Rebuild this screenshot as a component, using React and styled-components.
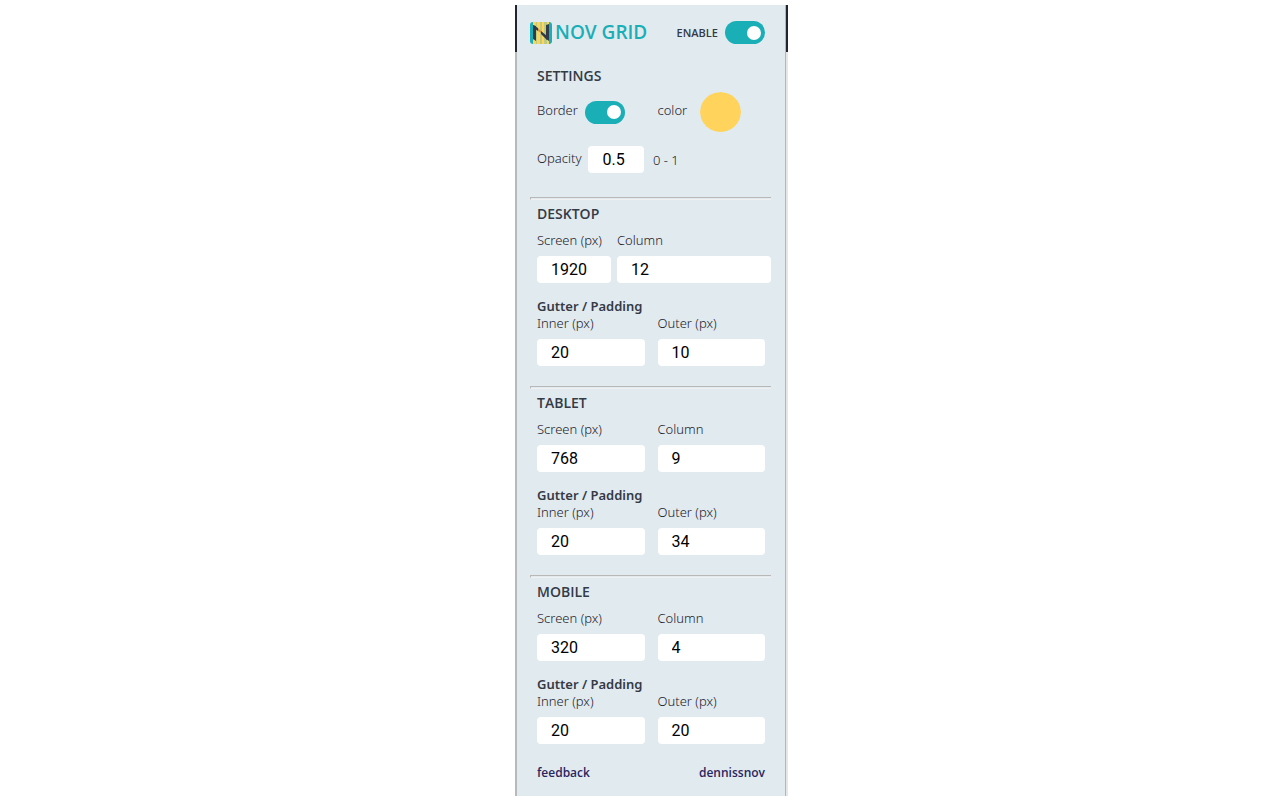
import React, { useState } from "react";
import styled, { createGlobalStyle } from "styled-components";

const screens = [
  { name: "Desktop", screen: "1920", column: "12", inner: "20", outer: "10", wide: true },
  { name: "Tablet", screen: "768", column: "9", inner: "20", outer: "34" },
  { name: "Mobile", screen: "320", column: "4", inner: "20", outer: "20" },
];

const Logo = () => (
  <svg width="22" height="22" viewBox="0 0 22 22" aria-hidden="true">
    <rect width="22" height="22" rx="3" fill="#1aaeb7" />
    <path d="M3 0h16v22H3z" fill="#ffd35c" />
    <path d="M6 0h1v22H6zM10 0h2v22h-2zM14 0h3v22h-3z" fill="#bccb7c" />
    <path d="M3 3l3 1v15l-3-2zM16 3l3-1v17l-3-2z" fill="#343a46" />
    <path d="M3 3l5 3v3L5 7zM11 9l6 5v4l-6-6z" fill="#343a46" />
    <path d="M8 6l3 3v2L8 9z" fill="#c9964c" />
  </svg>
);

const Switch = ({ id }) => {
  const [on, setOn] = useState(true);
  return (
    <SwitchInput
      id={id}
      type="checkbox"
      checked={on}
      onChange={(e) => setOn(e.target.checked)}
    />
  );
};

const Field = ({ id, label, value }) => (
  <div>
    <Label htmlFor={id}>{label}</Label>
    <TextInput id={id} type="text" defaultValue={value} />
  </div>
);

const ScreenSection = ({ name, screen, column, inner, outer, wide }) => {
  const id = name.toLowerCase();
  return (
    <Section>
      <Title>{name}</Title>
      <Fields $wide={wide}>
        <Field id={`${id}-screen`} label="Screen (px)" value={screen} />
        <Field id={`${id}-column`} label="Column" value={column} />
      </Fields>
      <SubTitle>Gutter / Padding</SubTitle>
      <Fields>
        <Field id={`${id}-inner`} label="Inner (px)" value={inner} />
        <Field id={`${id}-outer`} label="Outer (px)" value={outer} />
      </Fields>
    </Section>
  );
};

const App = () => {
  const [color, setColor] = useState("#ffd35c");
  return (
    <>
      <GlobalStyle />
      <Page>
        <Edge />
        <Panel>
          <Header>
            <Brand>
              <Logo />
              NOV GRID
            </Brand>
            <EnableLabel htmlFor="enable">ENABLE</EnableLabel>
            <Switch id="enable" />
          </Header>
          <Settings>
            <Title>Settings</Title>
            <Options>
              <Option>
                <Label htmlFor="border">Border</Label>
                <Switch id="border" />
              </Option>
              <Option $gap="13px">
                <Label htmlFor="color">color</Label>
                <ColorInput
                  id="color"
                  type="color"
                  value={color}
                  onChange={(e) => setColor(e.target.value)}
                />
              </Option>
            </Options>
            <Options $last>
              <Option>
                <Label htmlFor="opacity">Opacity</Label>
                <TextInput id="opacity" type="text" defaultValue="0.5" />
              </Option>
              <Hint>0 - 1</Hint>
            </Options>
          </Settings>
          {screens.map((item) => (
            <ScreenSection key={item.name} {...item} />
          ))}
          <Footer>
            <a href="#feedback">feedback</a>
            <a href="#dennissnov">dennissnov</a>
          </Footer>
        </Panel>
        <Edge $right />
      </Page>
    </>
  );
};

const GlobalStyle = createGlobalStyle`
  *,
  *::before {
    box-sizing: border-box;
  }
  body {
    margin: 0;
    background: #fff;
    color: #343a46;
    font-family: "Noto Sans", "Open Sans", sans-serif;
    font-size: 13px;
    line-height: 18px;
  }
`;

const Page = styled.main`
  display: flex;
  justify-content: center;
  padding: 5px 0 4px 23px;
`;

const Edge = styled.div`
  width: ${({ $right }) => ($right ? "3px" : "2px")};
  border-left: ${({ $right }) => ($right ? "1px solid #b4b6b8" : "0")};
  background: linear-gradient(
    #22252f 47px,
    ${({ $right }) => ($right ? "#e6e6e4" : "#b9b9bb")} 47px
  );
`;

const Panel = styled.div`
  flex: 0 1 268px;
  padding: 0 14px 0 13px;
  background: #e1eaef;
`;

const Header = styled.header`
  display: flex;
  align-items: center;
  padding: 16px 6px 0 0;
`;

const Brand = styled.h1`
  display: flex;
  align-items: center;
  gap: 3px;
  margin: 0 auto 0 0;
  color: #1aaeb7;
  font-family: "Open Sans", sans-serif;
  font-size: 19px;
  font-weight: 600;
  line-height: 23px;
  white-space: nowrap;
`;

const EnableLabel = styled.label`
  margin-right: 7px;
  font-family: "Open Sans", sans-serif;
  font-size: 11px;
  font-weight: 600;
`;

const SwitchInput = styled.input`
  appearance: none;
  display: flex;
  align-items: center;
  flex-shrink: 0;
  width: 40px;
  height: 23px;
  margin: 0;
  padding: 0 4px;
  border-radius: 12px;
  background: #9fb0b8;
  cursor: pointer;
  &::before {
    content: "";
    width: 14px;
    height: 14px;
    border-radius: 50%;
    background: #fff;
  }
  &:checked {
    justify-content: flex-end;
    background: #1aaeb7;
  }
`;

const Settings = styled.section`
  padding: 22px 6px 24px 7px;
`;

const Section = styled.section`
  padding-bottom: 20px;
  /* groove line above each screen size */
  &::before {
    content: "";
    display: block;
    height: 3px;
    border-top: 1px solid #b8b8b8;
    border-left: 1px solid #b8b8b8;
    border-bottom: 1px solid #f0f0f0;
  }
  > * {
    margin-left: 7px;
  }
`;

const Title = styled.h2`
  margin-top: 4px;
  margin-bottom: 7px;
  font-family: "Open Sans", sans-serif;
  font-size: 14px;
  font-weight: 600;
  line-height: 20px;
  text-transform: uppercase;
  ${Settings} & {
    margin: 0 0 6px;
  }
`;

const SubTitle = styled.h3`
  margin-top: 15px;
  margin-bottom: 0;
  font-size: 13px;
  font-weight: 600;
  line-height: 16px;
`;

const Label = styled.label`
  display: block;
  color: #1c212b;
  font-weight: 300;
`;

const TextInput = styled.input`
  width: 100%;
  min-width: 0;
  height: 27px;
  padding: 0 14px;
  border: 0;
  border-radius: 4px;
  background: #fff;
  color: #000;
  font-family: Roboto, "Liberation Sans", sans-serif;
  font-size: 16px;
`;

const Fields = styled.div`
  display: grid;
  grid-template-columns: ${({ $wide }) => ($wide ? "74px 1fr" : "1fr 1fr")};
  gap: ${({ $wide }) => ($wide ? "6px" : "13px")};
  margin-right: ${({ $wide }) => ($wide ? "0" : "6px")};
  ${TextInput} {
    display: block;
    margin-top: 7px;
  }
`;

const Options = styled.div`
  display: grid;
  grid-template-columns: ${({ $last }) => ($last ? "107px 1fr" : "1fr 1fr")};
  align-items: center;
  gap: ${({ $last }) => ($last ? "9px" : "13px")};
  margin-top: ${({ $last }) => ($last ? "14px" : "0")};
`;

const Option = styled.div`
  display: flex;
  align-items: center;
  gap: ${({ $gap }) => $gap || "7px"};
  ${Label} {
    padding-bottom: 4px;
  }
`;

const ColorInput = styled.input`
  appearance: none;
  width: 41px;
  height: 40px;
  padding: 0;
  border: 0;
  border-radius: 50%;
  background: none;
  cursor: pointer;
  &::-webkit-color-swatch-wrapper {
    padding: 0;
  }
  &::-webkit-color-swatch {
    border: 0;
    border-radius: 50%;
  }
`;

const Hint = styled.span`
  color: #1c212b;
  font-weight: 300;
`;

const Footer = styled.footer`
  display: flex;
  justify-content: space-between;
  padding: 0 6px 14px 7px;
  font-family: "Open Sans", sans-serif;
  font-size: 12px;
  a {
    color: #2b2560;
    font-weight: 600;
    text-decoration: none;
  }
`;

export default App;
